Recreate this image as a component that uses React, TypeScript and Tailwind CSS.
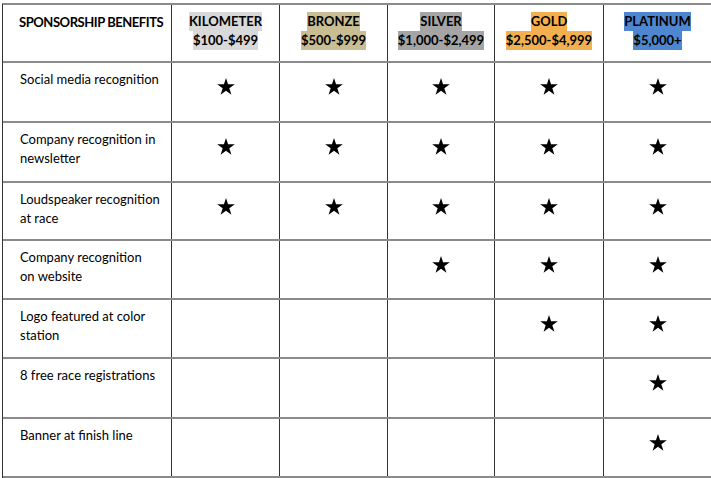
const tiers = [
  { name: "KILOMETER", price: "$100-$499", bg: "bg-[#d9d9d9]" },
  { name: "BRONZE", price: "$500-$999", bg: "bg-[#c8bd93]" },
  { name: "SILVER", price: "$1,000-$2,499", bg: "bg-[#a5a5a5]" },
  { name: "GOLD", price: "$2,500-$4,999", bg: "bg-[#f4b04f]" },
  { name: "PLATINUM", price: "$5,000+", bg: "bg-[#4e86cf]" },
]

const benefits = [
  { label: ["Social media recognition"], from: 0, h: "h-[60px]" },
  { label: ["Company recognition in", "newsletter"], from: 0, h: "h-[60px]" },
  { label: ["Loudspeaker recognition", "at race"], from: 0, h: "h-[58px]" },
  { label: ["Company recognition", "on website"], from: 2, h: "h-[59px]" },
  { label: ["Logo featured at color", "station"], from: 3, h: "h-[59px]" },
  { label: ["8 free race registrations"], from: 4, h: "h-[60px]" },
  { label: ["Banner at finish line"], from: 4, h: "h-[59px]" },
]

function Star() {
  return (
    <svg width="18" height="17" viewBox="0 0 24 23" className="fill-black">
      <polygon points="12,0 14.8,8.6 23.9,8.6 16.5,14 19.3,22.7 12,17.3 4.7,22.7 7.5,14 0.1,8.6 9.2,8.6" />
    </svg>
  )
}

const cols = "grid grid-cols-[168px_108px_108px_107px_109px_108px]"

export default function App() {
  return (
    <div className="w-[711px] h-[478px] bg-white pl-[2px] pt-[3px] font-['Lato','Liberation_Sans',sans-serif] text-[13px] text-black">
      <div className="border-l border-t-2 border-l-[#333] border-t-[#8a8a8a]">
        {/* Header row */}
        <div className={`${cols} h-[58px] border-b-2 border-[#8a8a8a]`}>
          <div className="pl-4 pt-[7px] font-bold leading-[20px] whitespace-nowrap tracking-[-0.45px]">
            SPONSORSHIP BENEFITS
          </div>
          {tiers.map((t) => (
            <div
              key={t.name}
              className="border-l border-[#333] pt-[7px] flex flex-col items-center font-bold leading-[19px]"
            >
              <span className={t.bg}>{t.name}</span>
              <span className={t.bg}>{t.price}</span>
            </div>
          ))}
        </div>

        {/* Benefit rows */}
        {benefits.map((b) => (
          <div key={b.label[0]} className={`${cols} ${b.h} border-b-2 border-[#8a8a8a]`}>
            <div className="pl-[17px] pt-[7px] leading-[19px]">
              {b.label.map((l) => (
                <div key={l}>{l}</div>
              ))}
            </div>
            {tiers.map((t, i) => (
              <div key={t.name} className="border-l border-[#333] flex justify-center pt-[15px]">
                {i >= b.from && <Star />}
              </div>
            ))}
          </div>
        ))}
      </div>
    </div>
  )
}
